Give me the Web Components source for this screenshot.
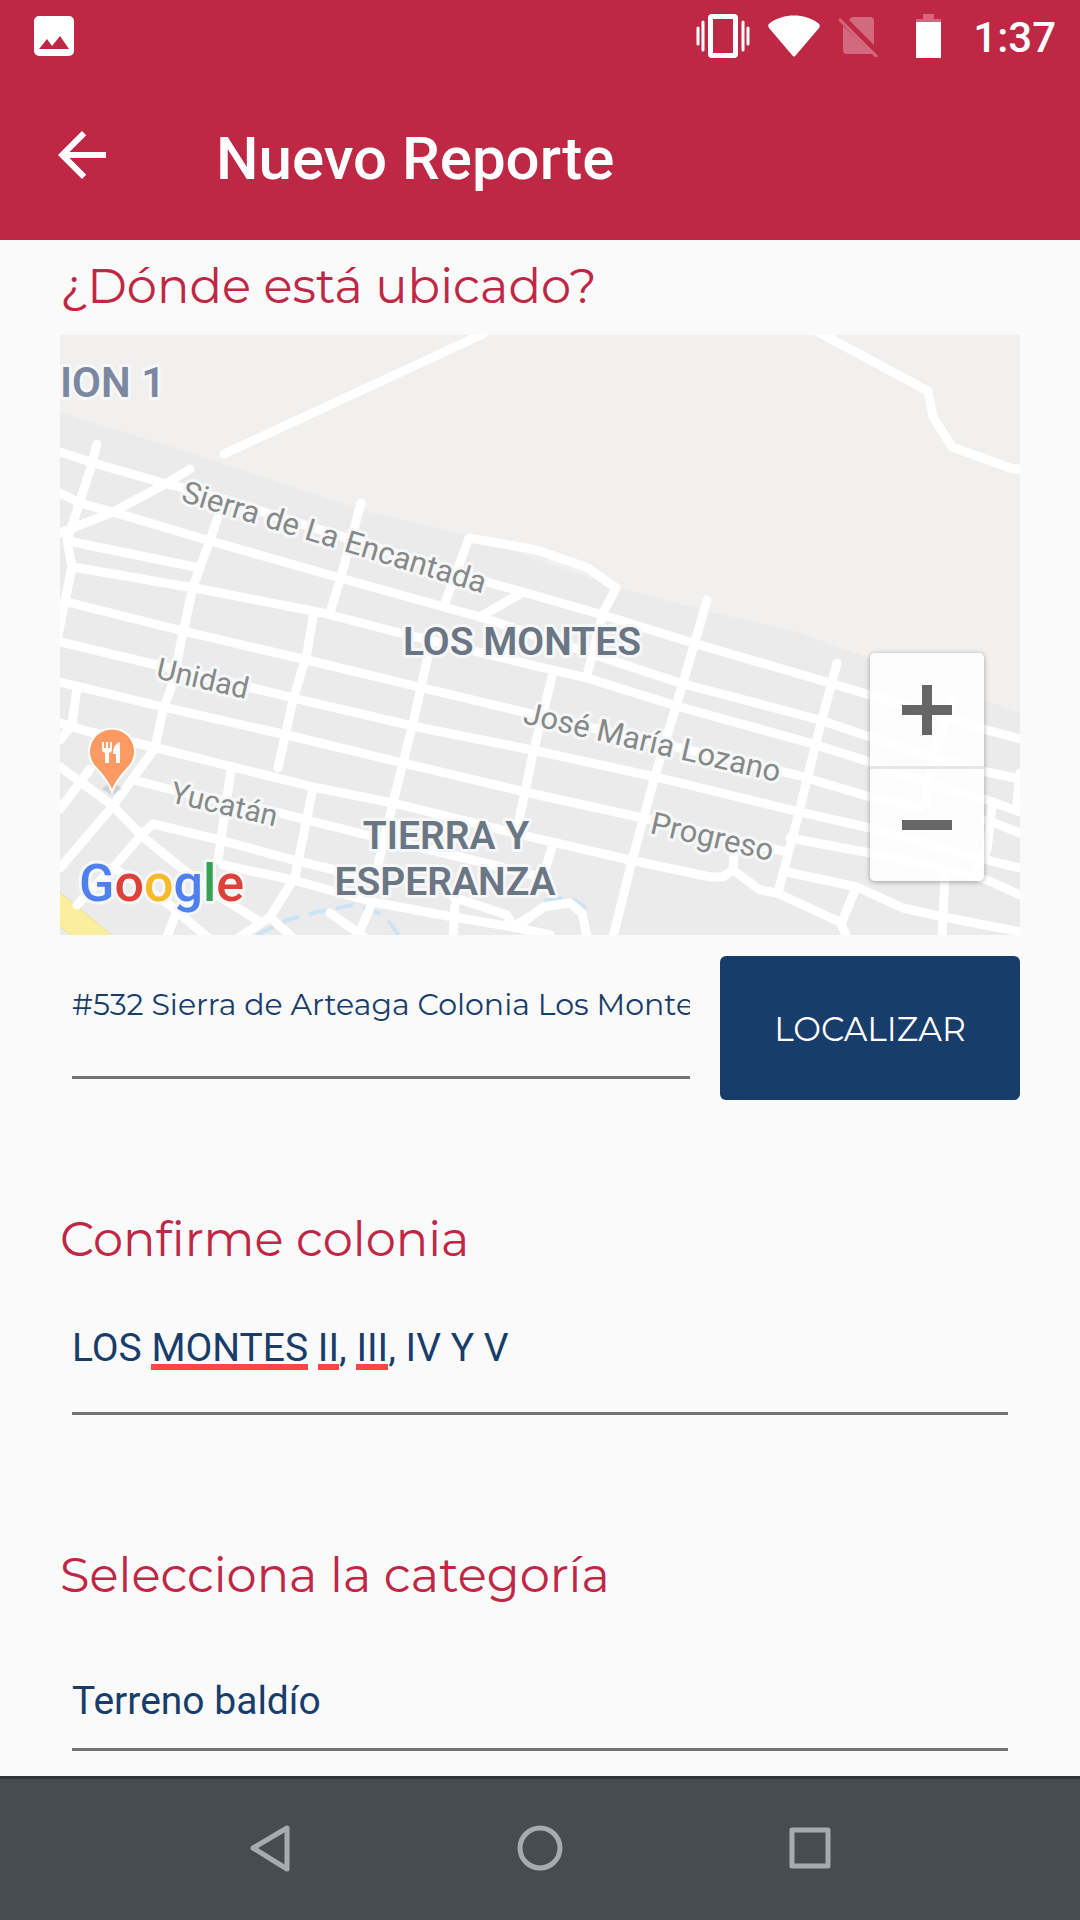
<!DOCTYPE html>
<html lang="es">
<head>
<meta charset="utf-8">
<meta name="viewport" content="width=device-width, initial-scale=1">
<title>Nuevo Reporte</title>
<style>
  :root {
    --red: #bf2845;
    --navy: #183d6b;
    --paper: #fafafa;
    --rule: #737373;
    --brand-font: Montserrat, Inter, sans-serif;
    --ui-font: Roboto, sans-serif;
  }
  body {
    margin: 0;
    background: var(--paper);
    font-family: var(--ui-font);
    font-variant-ligatures: none;
  }
</style>
</head>
<body>
<report-app></report-app>

<script>
/**
 * Android style status bar: notification on the left, system state on the right
 * @element status-bar
 * @attr {string} time - The clock text
 */
class StatusBar extends HTMLElement {
  constructor() {
    super();
    this.attachShadow({ mode: 'open' });
  }

  connectedCallback() {
    this.shadowRoot.innerHTML = `
      <style>
        :host {
          display: flex;
          align-items: center;
          height: 72px;
          padding: 0 24px 0 34px;
          color: #fff;
        }
        svg { display: block; fill: currentColor; }
        .system { display: flex; align-items: center; margin-left: auto; }
        .vibrate { margin-right: 18px; }
        .wifi { margin-right: 18px; }
        .sim { margin-right: 38px; }
        .battery { margin-right: 31px; }
        .faded { opacity: 0.3; }
        time { padding-top: 4px; font-size: 42px; line-height: 48px; font-weight: 500; }
      </style>
      <svg width="40" height="40" viewBox="0 0 40 40" aria-hidden="true">
        <path fill-rule="evenodd" d="M5 0h30a5 5 0 0 1 5 5v30a5 5 0 0 1-5 5H5a5 5 0 0 1-5-5V5a5 5 0 0 1 5-5zM5 33h30L26 20l-8 10-5-7z"/>
      </svg>
      <div class="system">
        <svg class="vibrate" width="54" height="44" viewBox="0 0 54 44" aria-hidden="true">
          <path fill-rule="evenodd" d="M16 0h22a4 4 0 0 1 4 4v36a4 4 0 0 1-4 4H16a4 4 0 0 1-4-4V4a4 4 0 0 1 4-4zM17 5v34h20V5z"/>
          <path d="M7 8v28M47 8v28M2 14v16M52 14v16" stroke="currentColor" stroke-width="3" stroke-linecap="round"/>
        </svg>
        <svg class="wifi" width="52" height="42" viewBox="0 0 52 42" aria-hidden="true">
          <path d="M2 8C15-2 37-2 50 8q3 2 1 5L28 40q-2 3-4 0L1 13q-2-3 1-5z"/>
        </svg>
        <svg class="sim faded" width="40" height="42" viewBox="0 0 40 42" aria-hidden="true">
          <path d="M14 2h18q4 0 4 4v24L11 5zM5 11l30 28H9q-4 0-4-4z"/>
          <path d="M2 5l36 36" stroke="currentColor" stroke-width="3" stroke-linecap="round"/>
        </svg>
        <svg class="battery" width="26" height="44" viewBox="0 0 26 44" aria-hidden="true">
          <path d="M7 0h11v5h7v3H0V5h7z" opacity="0.3"/>
          <path d="M0 8h25v36H0z"/>
        </svg>
        <time>${this.getAttribute('time') || ''}</time>
      </div>
    `;
  }
}
customElements.define('status-bar', StatusBar);

/**
 * Title bar with a back button; the title is slotted
 * @element app-bar
 */
class AppBar extends HTMLElement {
  constructor() {
    super();
    this.attachShadow({ mode: 'open' });
  }

  connectedCallback() {
    this.shadowRoot.innerHTML = `
      <style>
        :host {
          display: flex;
          align-items: center;
          gap: 98px;
          height: 166px;
          padding: 0 46px 2px;
          color: #fff;
        }
        button {
          padding: 0;
          border: 0;
          background: none;
          color: inherit;
        }
        svg { display: block; fill: currentColor; }
        h1 {
          margin: 0;
          padding-top: 8px;
          font-size: 60px;
          line-height: 72px;
          font-weight: 500;
        }
      </style>
      <button type="button" aria-label="Regresar">
        <svg width="72" height="72" viewBox="0 0 24 24" aria-hidden="true">
          <path d="M20 11H7.83l5.59-5.59L12 4l-8 8 8 8 1.41-1.41L7.83 13H20z"/>
        </svg>
      </button>
      <h1><slot></slot></h1>
    `;
  }
}
customElements.define('app-bar', AppBar);

/**
 * Plus and minus buttons laid over the map
 * @element zoom-control
 */
class ZoomControl extends HTMLElement {
  constructor() {
    super();
    this.attachShadow({ mode: 'open' });
  }

  connectedCallback() {
    this.shadowRoot.innerHTML = `
      <style>
        :host {
          display: flex;
          flex-direction: column;
          width: 114px;
          border-radius: 5px;
          overflow: hidden;
          box-shadow: 0 1px 5px rgba(0, 0, 0, 0.35);
        }
        button {
          display: flex;
          align-items: center;
          justify-content: center;
          height: 113px;
          padding: 0;
          border: 0;
          background: rgba(255, 255, 255, 0.86);
        }
        button + button { border-top: 3px solid #e6e6e6; height: 115px; }
        svg { display: block; stroke: #666; stroke-width: 10; }
      </style>
      <button type="button" aria-label="Acercar">
        <svg width="50" height="50" viewBox="0 0 50 50"><path d="M0 25h50M25 0v50"/></svg>
      </button>
      <button type="button" aria-label="Alejar">
        <svg width="50" height="50" viewBox="0 0 50 50"><path d="M0 25h50"/></svg>
      </button>
    `;
  }
}
customElements.define('zoom-control', ZoomControl);

// Street centre lines, in the 960x600 space of the map
const STREETS = [
  // country roads
  '423,-1 164,119',
  '758,-3 868,56 873,82 892,112 953,134 962,134',
  // running west to east
  '0,117 37,129 103,148 140,157 430,248 463,257 543,280 633,308 770,348 810,360 927,395 960,404',
  '0,158 20,168 53,177 147,205 280,243 420,282 620,348 760,385 810,402 873,422 927,437 960,444',
  '13,207 140,233',
  '13,232 140,254 263,278 340,298 480,332 527,343 620,372 750,408 810,427 867,448 927,465 960,477',
  '7,267 123,296 247,325 363,353 463,377 737,440 810,462 860,472',
  '0,307 97,330 193,353 233,363 357,392 477,416 600,443 740,477 810,493 860,507 927,525 960,533',
  '0,347 103,372 227,400 343,428 465,457 583,483 727,517',
  '0,388 30,397 93,412 173,432 253,452 333,468 475,503 570,525 650,542 663,542 673,535 700,555 717,558 780,587 787,602',
  '73,445 113,455 220,478 247,485 307,500 413,525 480,542',
  '83,498 93,489 160,505 233,525 300,541',
  '163,530 233,545 313,567 393,582 453,592 490,600',
  '730,503 810,518 877,532 927,545 960,560',
  '727,537 797,552 843,573 883,582 962,597',
  '927,485 960,498',
  // running north to south
  '37,109 30,135 13,188 7,205 12,232 -2,300',
  '130,134 107,148 53,177 0,198',
  '158,182 150,205 133,252 122,302 113,348 103,375 95,413 52,472 0,533',
  '301,168 282,238 270,278',
  '253,282 247,318 233,365 218,433',
  '385,268 409,203 477,215 528,233 556,253 543,278 527,340',
  '420,282 463,257',
  '370,312 353,388 333,468 318,530',
  '492,342 473,418 458,490',
  '647,265 637,300 617,368 593,448 573,522 553,602',
  '777,328 760,392 737,485 718,558',
  '171,435 158,525',
  '253,453 235,542 210,582 180,602',
  '210,582 232,602',
  '17,353 12,388',
  '12,390 0,405',
  '0,432 52,470 83,502 120,532 160,562 197,585',
  '0,474 30,434',
  '83,498 60,525 17,570',
  '57,535 107,568 147,602',
  '117,575 107,602',
  '270,578 304,602',
  '310,573 298,600',
  '393,562 447,580 453,592 480,575',
  '395,570 393,602',
  '460,590 483,572 510,568 522,578 527,602',
  '492,512 485,535',
  '674,520 673,535',
  '795,555 782,587',
  '885,540 882,602',
  '932,472 927,515 917,532',
  '960,438 957,468',
  '893,365 873,422 865,468'
];

/**
 * Street map of the reported place
 * @element street-map
 */
class StreetMap extends HTMLElement {
  constructor() {
    super();
    this.attachShadow({ mode: 'open' });
  }

  connectedCallback() {
    const lines = STREETS.map(points => `<polyline points="${points}"/>`).join('');

    this.shadowRoot.innerHTML = `
      <style>
        :host {
          display: block;
          position: relative;
          height: 600px;
          overflow: hidden;
          background: #f1f0ef;
        }
        .canvas { display: block; width: 100%; height: 100%; }
        .streets { fill: none; stroke: #fff; stroke-width: 9; stroke-linecap: round; stroke-linejoin: round; }
        text {
          font-family: Roboto, sans-serif;
          paint-order: stroke;
          stroke: #f6f7f8;
          stroke-width: 6;
          stroke-linejoin: round;
        }
        .street { font-size: 31px; fill: #868988; }
        .short { font-size: 30px; }
        .area { font-size: 39px; font-weight: 600; fill: #6b7684; text-anchor: middle; }
        .large { font-size: 42px; fill: #7c88a0; text-anchor: start; }
        .logo { font-size: 52px; font-weight: 500; }
        zoom-control {
          position: absolute;
          right: 36px;
          bottom: 54px;
        }
      </style>
      <svg class="canvas" viewBox="0 0 960 600" preserveAspectRatio="xMidYMid slice" role="img" aria-label="Mapa">
        <path fill="#ebebeb" d="M0 77L130 118L313 178L407 200L560 253L647 276L737 297L960 378V600H0z"/>
        <path fill="#fbef9d" stroke="#eadf9c" d="M-2 556L54 602H13L-2 590z"/>
        <path fill="none" stroke="#cbe3f3" stroke-width="4" stroke-dasharray="18 10" d="M197 600L227 585L257 577L293 570L317 577L330 588L340 602M484 566Q510 556 526 574"/>
        <g class="streets">${lines}</g>
        <text class="area large" x="0" y="62">ION 1</text>
        <text class="street" transform="translate(120 166) rotate(17)">Sierra de La Encantada</text>
        <text class="street short" transform="translate(95 343) rotate(13)">Unidad</text>
        <text class="street short" transform="translate(109 467) rotate(13)">Yucatán</text>
        <text class="street" transform="translate(462 388) rotate(13)">José María Lozano</text>
        <text class="street" transform="translate(589 498) rotate(13)">Progreso</text>
        <text class="area" x="462" y="320">LOS MONTES</text>
        <text class="area" x="386" y="514">TIERRA Y</text>
        <text class="area" x="385" y="560">ESPERANZA</text>
        <path fill="#9aa0a6" opacity="0.35" d="M42 454l10 6 10-6-10-8z"/>
        <path fill="#fd9a63" stroke="#fff" stroke-width="2" d="M52 457Q49 447 36 433A23 23 0 1 1 68 433Q55 447 52 457z"/>
        <path fill="#fff" d="M42 407h2v6h2v-6h2v6h2v-6h2v8q0 2-3 3v10h-4v-10q-3-1-3-3zM60 407v21h-4v-9h-3q0-10 7-12z"/>
        <text class="logo" x="19" y="566"><tspan fill="#4f80ed">G</tspan><tspan fill="#dd4238">o</tspan><tspan fill="#f6b929">o</tspan><tspan fill="#4f80ed">g</tspan><tspan fill="#34a155">l</tspan><tspan fill="#dd4238">e</tspan></text>
      </svg>
      <zoom-control></zoom-control>
    `;
  }
}
customElements.define('street-map', StreetMap);

/**
 * Underlined form control with an optional heading label
 *
 * @element report-field
 * @attr {string} label - Heading above the control (optional)
 * @attr {string} hint - Accessible name when there is no heading
 * @attr {string} value - Current value
 * @attr {string} type - "text" or "select"
 * @attr {string} misspelled - Words that get a red mark, separated by spaces
 */
class ReportField extends HTMLElement {
  constructor() {
    super();
    this.attachShadow({ mode: 'open' });
  }

  connectedCallback() {
    const label = this.getAttribute('label') || '';
    const hint = this.getAttribute('hint') || '';
    const value = this.getAttribute('value') || '';
    const name = label ? '' : `aria-label="${hint}"`;

    const control = this.getAttribute('type') === 'select'
      ? `<select id="control" ${name}><option>${value}</option></select>`
      : `<input id="control" type="text" spellcheck="false" ${name} value="${value}">`;

    this.shadowRoot.innerHTML = `
      <style>
        :host {
          display: flex;
          flex-direction: column;
          justify-content: flex-end;
          min-width: 0;
        }
        label {
          color: var(--red);
          font-family: var(--brand-font);
          font-size: 48px;
          line-height: 60px;
          margin-bottom: var(--label-gap, 55px);
        }
        .line {
          position: relative;
          margin: 0 12px;
          padding-bottom: var(--rule-gap, 40px);
          border-bottom: 3px solid var(--rule);
        }
        input, select {
          display: block;
          box-sizing: border-box;
          width: 100%;
          height: 48px;
          margin: 0;
          padding: 0;
          border: 0;
          outline: 0;
          appearance: none;
          background: none;
          color: var(--navy);
          font-family: var(--ui-font);
          font-size: 39px;
          line-height: 48px;
        }
        :host([small]) input {
          height: 36px;
          font-family: var(--brand-font);
          font-size: 30px;
          line-height: 36px;
        }
        .mark {
          position: absolute;
          top: 40px;
          height: 6px;
          background: #ff4547;
        }
      </style>
      ${label ? `<label for="control">${label}</label>` : ''}
      <div class="line">${control}</div>
    `;
    this.drawMarks(value);
  }

  // Measure where each misspelled word starts and ends
  drawMarks(value) {
    const words = (this.getAttribute('misspelled') || '').split(' ').filter(Boolean);
    if (!words.length) return;

    const line = this.shadowRoot.querySelector('.line');
    const style = getComputedStyle(this.shadowRoot.querySelector('#control'));
    const ctx = document.createElement('canvas').getContext('2d');
    ctx.font = `${style.fontSize} ${style.fontFamily}`;

    let from = 0;
    words.forEach(word => {
      const at = value.indexOf(word, from);
      if (at < 0) return;
      from = at + word.length;
      const mark = document.createElement('span');
      mark.className = 'mark';
      mark.style.left = `${Math.round(ctx.measureText(value.slice(0, at)).width)}px`;
      mark.style.width = `${Math.round(ctx.measureText(word).width)}px`;
      line.append(mark);
    });
  }
}
customElements.define('report-field', ReportField);

/**
 * Filled action button
 * @element action-button
 */
class ActionButton extends HTMLElement {
  constructor() {
    super();
    this.attachShadow({ mode: 'open' });
  }

  connectedCallback() {
    this.shadowRoot.innerHTML = `
      <style>
        :host { display: block; }
        button {
          width: 100%;
          height: 144px;
          padding: 2px 0 0;
          border: 0;
          border-radius: 6px;
          background: var(--navy);
          color: #fff;
          font-family: var(--brand-font);
          font-size: 33px;
          line-height: 40px;
          font-weight: 400;
        }
      </style>
      <button type="button"><slot></slot></button>
    `;
  }
}
customElements.define('action-button', ActionButton);

/**
 * System navigation: back, home and recent apps
 * @element nav-bar
 */
class NavBar extends HTMLElement {
  constructor() {
    super();
    this.attachShadow({ mode: 'open' });
  }

  connectedCallback() {
    this.shadowRoot.innerHTML = `
      <style>
        :host {
          display: block;
          border-top: 3px solid #303539;
          background: #464d52;
        }
        nav {
          display: grid;
          grid-template-columns: repeat(3, 1fr);
          justify-items: center;
          align-items: center;
          height: 139px;
          padding: 0 12.5% 2px;
        }
        button { padding: 0; border: 0; background: none; }
        svg {
          display: block;
          fill: none;
          stroke: #a6abaf;
          stroke-width: 5;
          stroke-linejoin: round;
        }
      </style>
      <nav>
        <button type="button" aria-label="Atrás">
          <svg width="72" height="72" viewBox="0 0 72 72"><path d="M53 15v41L19 35z"/></svg>
        </button>
        <button type="button" aria-label="Inicio">
          <svg width="72" height="72" viewBox="0 0 72 72"><circle cx="36" cy="35" r="20"/></svg>
        </button>
        <button type="button" aria-label="Recientes">
          <svg width="72" height="72" viewBox="0 0 72 72"><rect x="18" y="17" width="36" height="36"/></svg>
        </button>
      </nav>
    `;
  }
}
customElements.define('nav-bar', NavBar);

/**
 * The whole report screen
 * @element report-app
 */
class ReportApp extends HTMLElement {
  constructor() {
    super();
    this.attachShadow({ mode: 'open' });
  }

  connectedCallback() {
    this.shadowRoot.innerHTML = `
      <style>
        :host {
          display: flex;
          flex-direction: column;
          min-height: 100vh;
        }
        header { background: var(--red); }
        main {
          flex: 1;
          padding: 16px 60px 25px;
        }
        h2 {
          margin: 0 0 19px;
          color: var(--red);
          font-family: var(--brand-font);
          font-size: 48px;
          line-height: 60px;
          font-weight: 400;
        }
        .locate {
          display: flex;
          gap: 18px;
          margin: 21px 0 109px;
        }
        .locate report-field {
          flex: 1;
          margin-bottom: 21px;
          --rule-gap: 53px;
        }
        .locate action-button { flex: 0 0 300px; }
        .colony { margin-bottom: 130px; }
        .category {
          --label-gap: 72px;
          --rule-gap: 23px;
        }
      </style>
      <header>
        <status-bar time="1:37"></status-bar>
        <app-bar>Nuevo Reporte</app-bar>
      </header>
      <main>
        <h2>¿Dónde está ubicado?</h2>
        <street-map></street-map>
        <div class="locate">
          <report-field small hint="Dirección" value="#532 Sierra de Arteaga Colonia Los Montes"></report-field>
          <action-button>LOCALIZAR</action-button>
        </div>
        <report-field class="colony" label="Confirme colonia" value="LOS MONTES II, III, IV Y V" misspelled="MONTES II III"></report-field>
        <report-field class="category" type="select" label="Selecciona la categoría" value="Terreno baldío"></report-field>
      </main>
      <nav-bar></nav-bar>
    `;
  }
}
customElements.define('report-app', ReportApp);
</script>
</body>
</html>
